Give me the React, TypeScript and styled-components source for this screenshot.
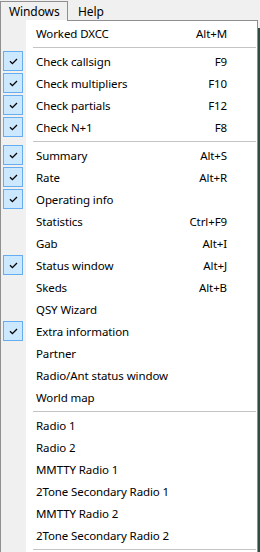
import React from "react";
import styled, { createGlobalStyle } from "styled-components";

const Global = createGlobalStyle`
  html, body { margin: 0; padding: 0; }
  body {
    width: 260px;
    height: 552px;
    overflow: hidden;
    background: #f0f0f0;
    font-family: "Noto Sans", "Open Sans", sans-serif;
    font-size: 11.5px;
    letter-spacing: -0.1px;
    color: #000;
  }
`;

const Screen = styled.div`
  display: flex;
  flex-direction: column;
  width: 260px;
  height: 552px;
`;

const MenuBar = styled.div`
  display: flex;
  height: 20px;
  background: #f0f0f0;
`;

const MenuTab = styled.div<{ $open?: boolean }>`
  box-sizing: border-box;
  height: 19px;
  margin-top: 1px;
  padding: 1px 0 0 ${(p) => (p.$open ? "8px" : "9px")};
  display: flex;
  align-items: center;
  font-size: 12px;
  border: 1px solid ${(p) => (p.$open ? "#8f8f8f" : "transparent")};
  border-bottom: none;
  width: ${(p) => (p.$open ? "68px" : "auto")};
`;

const Body = styled.div`
  flex: 1;
  display: flex;
  min-height: 0;
`;

const Dropdown = styled.div`
  box-sizing: border-box;
  width: 258px;
  border-left: 1px solid #8f8f8f;
  border-right: 1px solid #8f8f8f;
  padding: 1px 0 0;
  background: linear-gradient(to right, #f0f0f0 0 25px, #ffffff 25px);
  &::before {
    content: "";
    display: block;
    height: 1px;
    margin: -1px 0 1px 66px;
    background: #8f8f8f;
  }
`;

const Backdrop = styled.div`
  flex: 1;
  display: flex;
  flex-direction: column;
`;

const BackdropTop = styled.div`
  height: 8px;
  background: #f0f0f0;
`;

const BackdropRest = styled.div`
  flex: 1;
  background: #2c4f44;
`;

const Row = styled.div`
  display: flex;
  align-items: center;
  height: 22px;
  padding-right: 30px;
`;

const CheckCell = styled.div`
  width: 35px;
  height: 22px;
  display: flex;
  align-items: center;
  flex-shrink: 0;
`;

const CheckBox = styled.div`
  box-sizing: border-box;
  width: 20px;
  height: 20px;
  margin-left: 2px;
  border: 1px solid #66adf0;
  background: #cce8ff;
  display: flex;
  align-items: center;
  justify-content: center;
`;

const Label = styled.span`
  flex: 1;
  white-space: nowrap;
`;

const Shortcut = styled.span`
  white-space: nowrap;
  text-align: right;
`;

const Separator = styled.div`
  height: 6px;
  display: flex;
  align-items: center;
  padding: 0 1px 0 32px;
  &::after {
    content: "";
    flex: 1;
    height: 1px;
    background: #c4c4c4;
  }
`;

type Item = { label: string; shortcut?: string; checked?: boolean } | "sep";

const items: Item[] = [
  { label: "Worked DXCC", shortcut: "Alt+M" },
  "sep",
  { label: "Check callsign", shortcut: "F9", checked: true },
  { label: "Check multipliers", shortcut: "F10", checked: true },
  { label: "Check partials", shortcut: "F12", checked: true },
  { label: "Check N+1", shortcut: "F8", checked: true },
  "sep",
  { label: "Summary", shortcut: "Alt+S", checked: true },
  { label: "Rate", shortcut: "Alt+R", checked: true },
  { label: "Operating info", checked: true },
  { label: "Statistics", shortcut: "Ctrl+F9" },
  { label: "Gab", shortcut: "Alt+I" },
  { label: "Status window", shortcut: "Alt+J", checked: true },
  { label: "Skeds", shortcut: "Alt+B" },
  { label: "QSY Wizard" },
  { label: "Extra information", checked: true },
  { label: "Partner" },
  { label: "Radio/Ant status window" },
  { label: "World map" },
  "sep",
  { label: "Radio 1" },
  { label: "Radio 2" },
  { label: "MMTTY Radio 1" },
  { label: "2Tone Secondary Radio 1" },
  { label: "MMTTY Radio 2" },
  { label: "2Tone Secondary Radio 2" },
  "sep",
];

const Check = () => (
  <svg width="9" height="7" viewBox="0 0 9 7">
    <path d="M1 3.2 L3.4 5.6 L8 1" fill="none" stroke="#000" strokeWidth="1.3" />
  </svg>
);

export default function App() {
  return (
    <>
      <Global />
      <Screen>
        <MenuBar>
          <MenuTab $open>Windows</MenuTab>
          <MenuTab>Help</MenuTab>
        </MenuBar>
        <Body>
          <Dropdown>
            {items.map((it, i) =>
              it === "sep" ? (
                <Separator key={i} />
              ) : (
                <Row key={i}>
                  <CheckCell>
                    {it.checked && (
                      <CheckBox>
                        <Check />
                      </CheckBox>
                    )}
                  </CheckCell>
                  <Label>{it.label}</Label>
                  {it.shortcut && <Shortcut>{it.shortcut}</Shortcut>}
                </Row>
              )
            )}
          </Dropdown>
          <Backdrop>
            <BackdropTop />
            <BackdropRest />
          </Backdrop>
        </Body>
      </Screen>
    </>
  );
}
